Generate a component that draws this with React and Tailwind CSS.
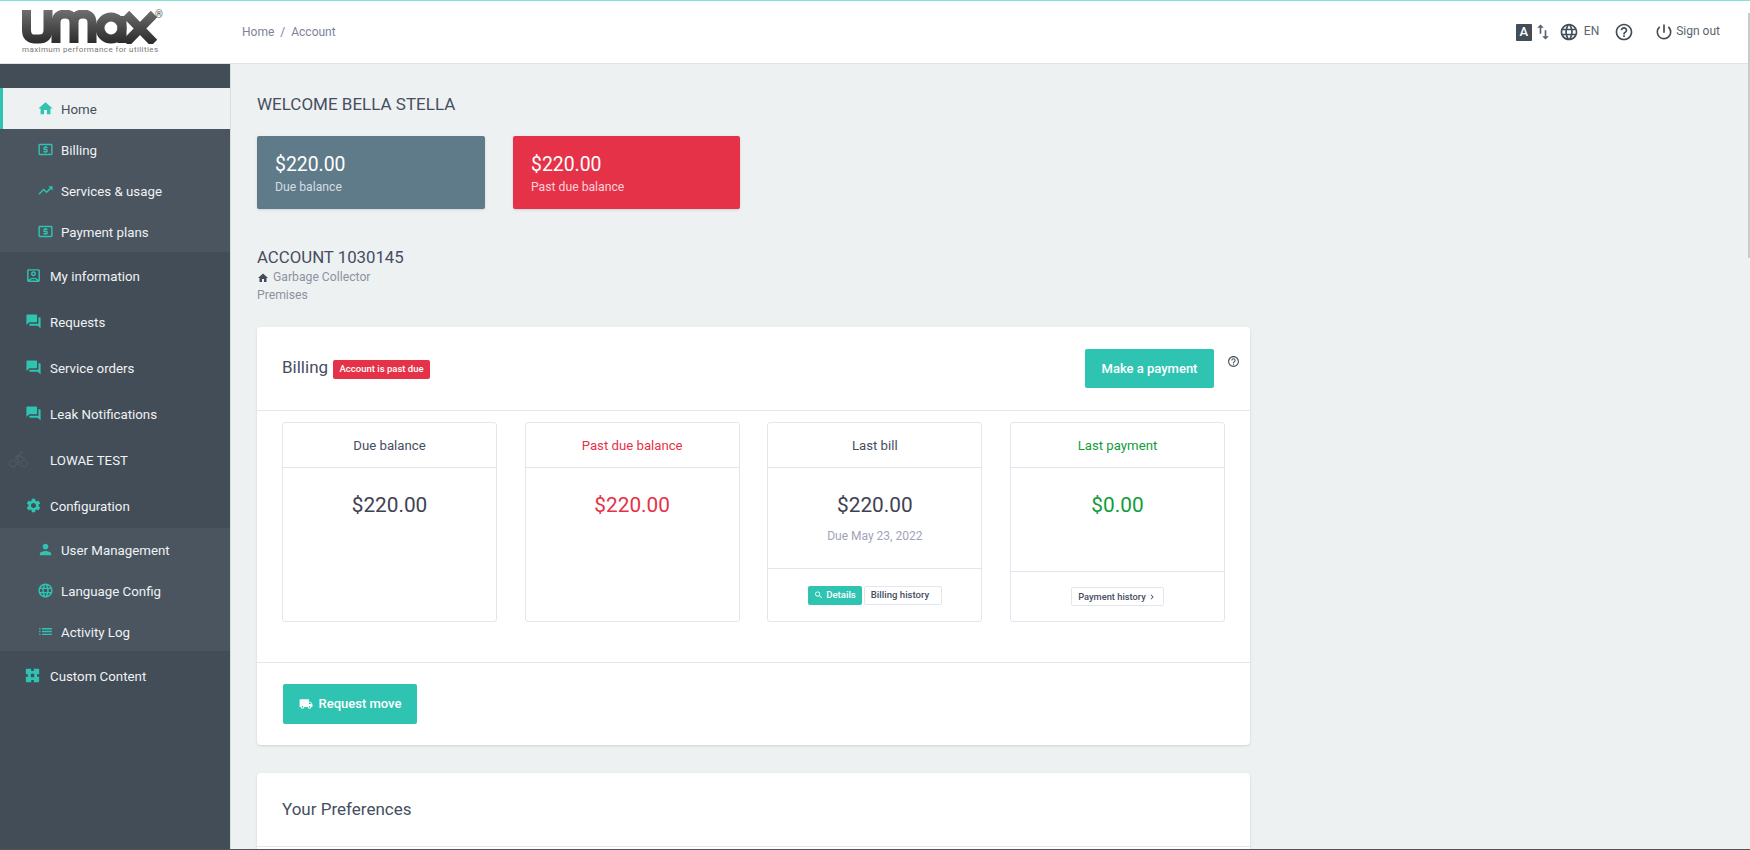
import React from "react";
import {
  MdHome, MdLocalAtm, MdTrendingUp, MdOutlineAccountBox, MdForum, MdDirectionsBike, MdSettings,
  MdPerson, MdLanguage, MdList, MdImportExport, MdHelpOutline, MdPowerSettingsNew,
  MdSearch, MdLocalShipping, MdChevronRight,
} from "react-icons/md";

function PuzzleBox() {
  return (
    <svg width={15} height={15} viewBox="0 0 18 18" fill="currentColor">
      <path fillRule="evenodd" d="M2 1h5.500v2.500h3V1H16a1 1 0 0 1 1 1v5.500h-2.500v3H17V16a1 1 0 0 1-1 1h-5.500v-2.500h-3V17H2a1 1 0 0 1-1-1v-5.500h2.500v-3H1V2a1 1 0 0 1 1-1z M7 7v4h4V7z" />
    </svg>
  );
}

function Logo() {
  return (
    <div className="flex flex-col w-[144px]">
      <div className="relative h-[34px]">
        <svg width="144" height="34" viewBox="0 0 144 34" className="block">
          <defs>
            <linearGradient id="lg" gradientUnits="userSpaceOnUse" x1="0" y1="0" x2="0" y2="34">
              <stop offset="0" stopColor="#6f6f6f" />
              <stop offset="1" stopColor="#2b292a" />
            </linearGradient>
          </defs>
          <g fill="none" stroke="url(#lg)" strokeWidth="9">
            <path d="M4.500 0 V20 Q4.500 29 13 29 H17 Q26 29 26 20 V0" />
            <path d="M34 33 V13 Q34 4 43 4 Q52 4 52 13 V33 M52 13 Q52 4 61 4 Q70 4 70 13 V33" />
            <circle cx="89" cy="18" r="11" />
            <path d="M100 6 V33" />
            <path d="M104 4 L132 33 M132 4 L104 33" />
          </g>
        </svg>
        <span className="absolute left-[133px] -top-[1px] text-[10px] leading-[12px] text-[#555]">®</span>
      </div>
      <div className="text-[8px] leading-[10px] tracking-[0.4px] text-[#777] mt-[1px] whitespace-nowrap">maximum performance for utilities</div>
    </div>
  );
}

function NavRow({ icon: I, label, sub, active, low, iconClass = "text-[#2fc4b2]", size = 17 }) {
  if (sub) {
    return (
      <div className={`flex items-center h-[41px] text-[13.3px] ${low ? "pt-[4px]" : "pt-[2px]"} ${active ? "bg-[#eef1f2] text-[#464e5f] border-l-[3px] border-[#2fc4b2] pl-[34px]" : "pl-[37px] text-[#f0f2f4]"}`}>
        <span className={`w-[24px] flex shrink-0 ${low ? "-mt-[3px]" : "-mt-[2px]"} ${iconClass}`}><I size={size} /></span>
        <span>{label}</span>
      </div>
    );
  }
  return (
    <div className="flex items-center h-[46px] pt-[4px] pl-[25px] text-[13.3px] text-[#f0f2f4]">
      <span className={`w-[25px] flex shrink-0 -mt-[3px] ${iconClass}`}><I size={size} /></span>
      <span>{label}</span>
    </div>
  );
}

function Sidebar() {
  return (
    <aside className="w-[231px] shrink-0 bg-[#434d57] pt-[24px] border-r border-[#d9dde0]">
      <div className="bg-[#4a5560]">
        <NavRow sub active icon={MdHome} label="Home" />
        <NavRow sub icon={MdLocalAtm} label="Billing" />
        <NavRow sub icon={MdTrendingUp} label="Services & usage" />
        <NavRow sub icon={MdLocalAtm} label="Payment plans" />
      </div>
      <NavRow icon={MdOutlineAccountBox} label="My information" />
      <NavRow icon={MdForum} label="Requests" />
      <NavRow icon={MdForum} label="Service orders" />
      <NavRow icon={MdForum} label="Leak Notifications" />
      <div className="flex items-center h-[46px] pt-[4px] pl-[9px] text-[13.3px] text-[#f0f2f4]">
        <span className="w-[41px] flex shrink-0 -mt-[3px] text-[#4a5a60]"><MdDirectionsBike size={19} /></span>
        <span>LOWAE TEST</span>
      </div>
      <NavRow icon={MdSettings} label="Configuration" />
      <div className="bg-[#4a5560]">
        <NavRow sub low icon={MdPerson} label="User Management" />
        <NavRow sub low icon={MdLanguage} label="Language Config" />
        <NavRow sub low icon={MdList} label="Activity Log" />
      </div>
      <div className="pt-[1px]">
        <NavRow icon={PuzzleBox} label="Custom Content" />
      </div>
    </aside>
  );
}

function Header() {
  return (
    <header className="h-[64px] shrink-0 bg-white border-t border-[#7fe3d5] border-b-[#dfe3e6] border-b flex items-center">
      <div className="w-[242px] pl-[22px] shrink-0"><Logo /></div>
      <div className="text-[12px] text-[#7e8299] flex gap-[6px]"><span>Home</span><span>/</span><span>Account</span></div>
      <div className="ml-auto flex items-center pr-[30px] text-[#5a6470] text-[12px]">
        <span className="w-[16px] h-[17px] rounded-[1px] bg-[#434d57] text-white text-[13px] font-medium flex items-center justify-center">A</span>
        <MdImportExport size={20} className="ml-[1px]" />
        <MdLanguage size={20} className="ml-[6px] text-[#434d57]" />
        <span className="ml-[5px] -mt-[2px]">EN</span>
        <MdHelpOutline size={20} className="ml-[15px] text-[#434d57]" />
        <MdPowerSettingsNew size={20} className="ml-[20px] text-[#434d57]" />
        <span className="ml-[2px] -mt-[2px]">Sign out</span>
      </div>
    </header>
  );
}

function Stat({ title, amount, color = "text-[#3f4254]", titleColor = "text-[#464e5f]", note, footer, footerH = "h-[53px]" }) {
  return (
    <div className="w-[215px] h-[200px] border border-[#e4e6ef] rounded-[3px] flex flex-col">
      <div className={`h-[45px] pt-[2px] shrink-0 border-b border-[#e4e6ef] flex items-center justify-center text-[13.2px] ${titleColor}`}>{title}</div>
      <div className="flex-1 flex flex-col items-center">
        <div className={`mt-[22px] text-[20.8px] leading-[30px] ${color}`}>{amount}</div>
        {note && <div className="mt-[7px] text-[12px] text-[#a1a5b7]">{note}</div>}
      </div>
      {footer && <div className={`${footerH} shrink-0 border-t border-[#e4e6ef] flex items-center justify-center`}>{footer}</div>}
    </div>
  );
}

const smallBtn = "h-[19px] border border-[#e4e6ef] rounded-[2px] font-medium text-[#464e5f] flex items-center bg-white";

function Main() {
  return (
    <main className="flex-1 min-w-0 pl-[26px] pt-[29px]">
      <h1 className="text-[17px] leading-[22px] text-[#464e5f] uppercase">Welcome Bella Stella</h1>
      <div className="flex gap-[28px] mt-[21px]">
        <div className="w-[228px] h-[73px] bg-[#5f7a88] rounded-[2px] shadow-sm pl-[18px] pt-[16px]">
          <div className="text-[19.4px] leading-[26px] text-white">$220.00</div>
          <div className="text-[12.2px] leading-[18px] text-[#d5dde2]">Due balance</div>
        </div>
        <div className="w-[227px] h-[73px] bg-[#e63248] rounded-[2px] shadow-sm pl-[18px] pt-[16px]">
          <div className="text-[19.4px] leading-[26px] text-white">$220.00</div>
          <div className="text-[12.2px] leading-[18px] text-[#fbd3d9]">Past due balance</div>
        </div>
      </div>
      <div className="mt-[37px] text-[16.8px] leading-[22px] text-[#464e5f]">ACCOUNT 1030145</div>
      <div className="flex items-center mt-[1px] text-[12.2px] leading-[17px] text-[#8d91a0]">
        <MdHome size={12} className="text-[#434d57] mr-[4px]" />Garbage Collector
      </div>
      <div className="text-[12.2px] leading-[18px] text-[#8d91a0]">Premises</div>

      <section className="mt-[23px] w-[993px] bg-white rounded-[4px] shadow-sm">
        <div className="h-[84px] border-b border-[#e4e6ef] flex items-center pl-[25px] pr-[10px]">
          <span className="text-[17px] -mt-[2px] text-[#464e5f]">Billing</span>
          <span className="ml-[5px] mt-[2px] h-[19px] px-[6.5px] bg-[#e63248] rounded-[2px] text-white text-[9.5px] font-medium flex items-center">Account is past due</span>
          <button className="ml-auto h-[39px] w-[129px] bg-[#2fc4b2] rounded-[2px] text-white text-[13px] font-medium">Make a payment</button>
          <MdHelpOutline size={13} className="ml-[13px] -mt-[15px] text-[#434d57]" />
        </div>
        <div className="flex justify-between pl-[25px] pr-[25px] pt-[11px] pb-[40px] border-b border-[#e4e6ef]">
          <Stat title="Due balance" amount="$220.00" />
          <Stat title="Past due balance" amount="$220.00" color="text-[#e63248]" titleColor="text-[#e63248]" />
          <Stat title="Last bill" amount="$220.00" note="Due May 23, 2022" footer={
            <div className="flex gap-[2px]">
              <span className="h-[19px] px-[6px] w-[54px] rounded-[2px] bg-[#2fc4b2] text-white text-[9.6px] font-medium flex items-center"><MdSearch size={10} className="mr-[3px]" />Details</span>
              <span className={`${smallBtn} text-[9.6px] w-[78px] pl-[6px]`}>Billing history</span>
            </div>
          } />
          <Stat title="Last payment" amount="$0.00" color="text-[#0f9d3a]" titleColor="text-[#0f9d3a]" footerH="h-[50px]" footer={
            <span className={`${smallBtn} text-[9.3px] px-[6px]`}>Payment history<MdChevronRight size={10} className="ml-[1px]" /></span>
          } />
        </div>
        <div className="pt-[21px] pb-[21px] pl-[26px]">
          <button className="h-[40px] w-[134px] bg-[#2fc4b2] rounded-[2px] text-white text-[13px] font-medium flex items-center justify-center">
            <MdLocalShipping size={14} className="mr-[6px]" />Request move
          </button>
        </div>
      </section>

      <section className="mt-[28px] w-[993px] bg-white rounded-t-[4px] shadow-sm h-[80px]">
        <div className="h-[74px] border-b border-[#e4e6ef] flex items-center pl-[25px] text-[17px] text-[#464e5f]">Your Preferences</div>
      </section>
    </main>
  );
}

export default function App() {
  return (
    <div className="relative h-[850px] w-[1750px] overflow-hidden flex flex-col bg-[#eef1f2] border-b border-[#555] font-['Roboto',sans-serif]">
      <Header />
      <div className="flex flex-1 min-h-0">
        <Sidebar />
        <Main />
      </div>
      <div className="absolute right-0 top-[13px] w-[2px] h-[245px] bg-[#c8cacb]" />
    </div>
  );
}
